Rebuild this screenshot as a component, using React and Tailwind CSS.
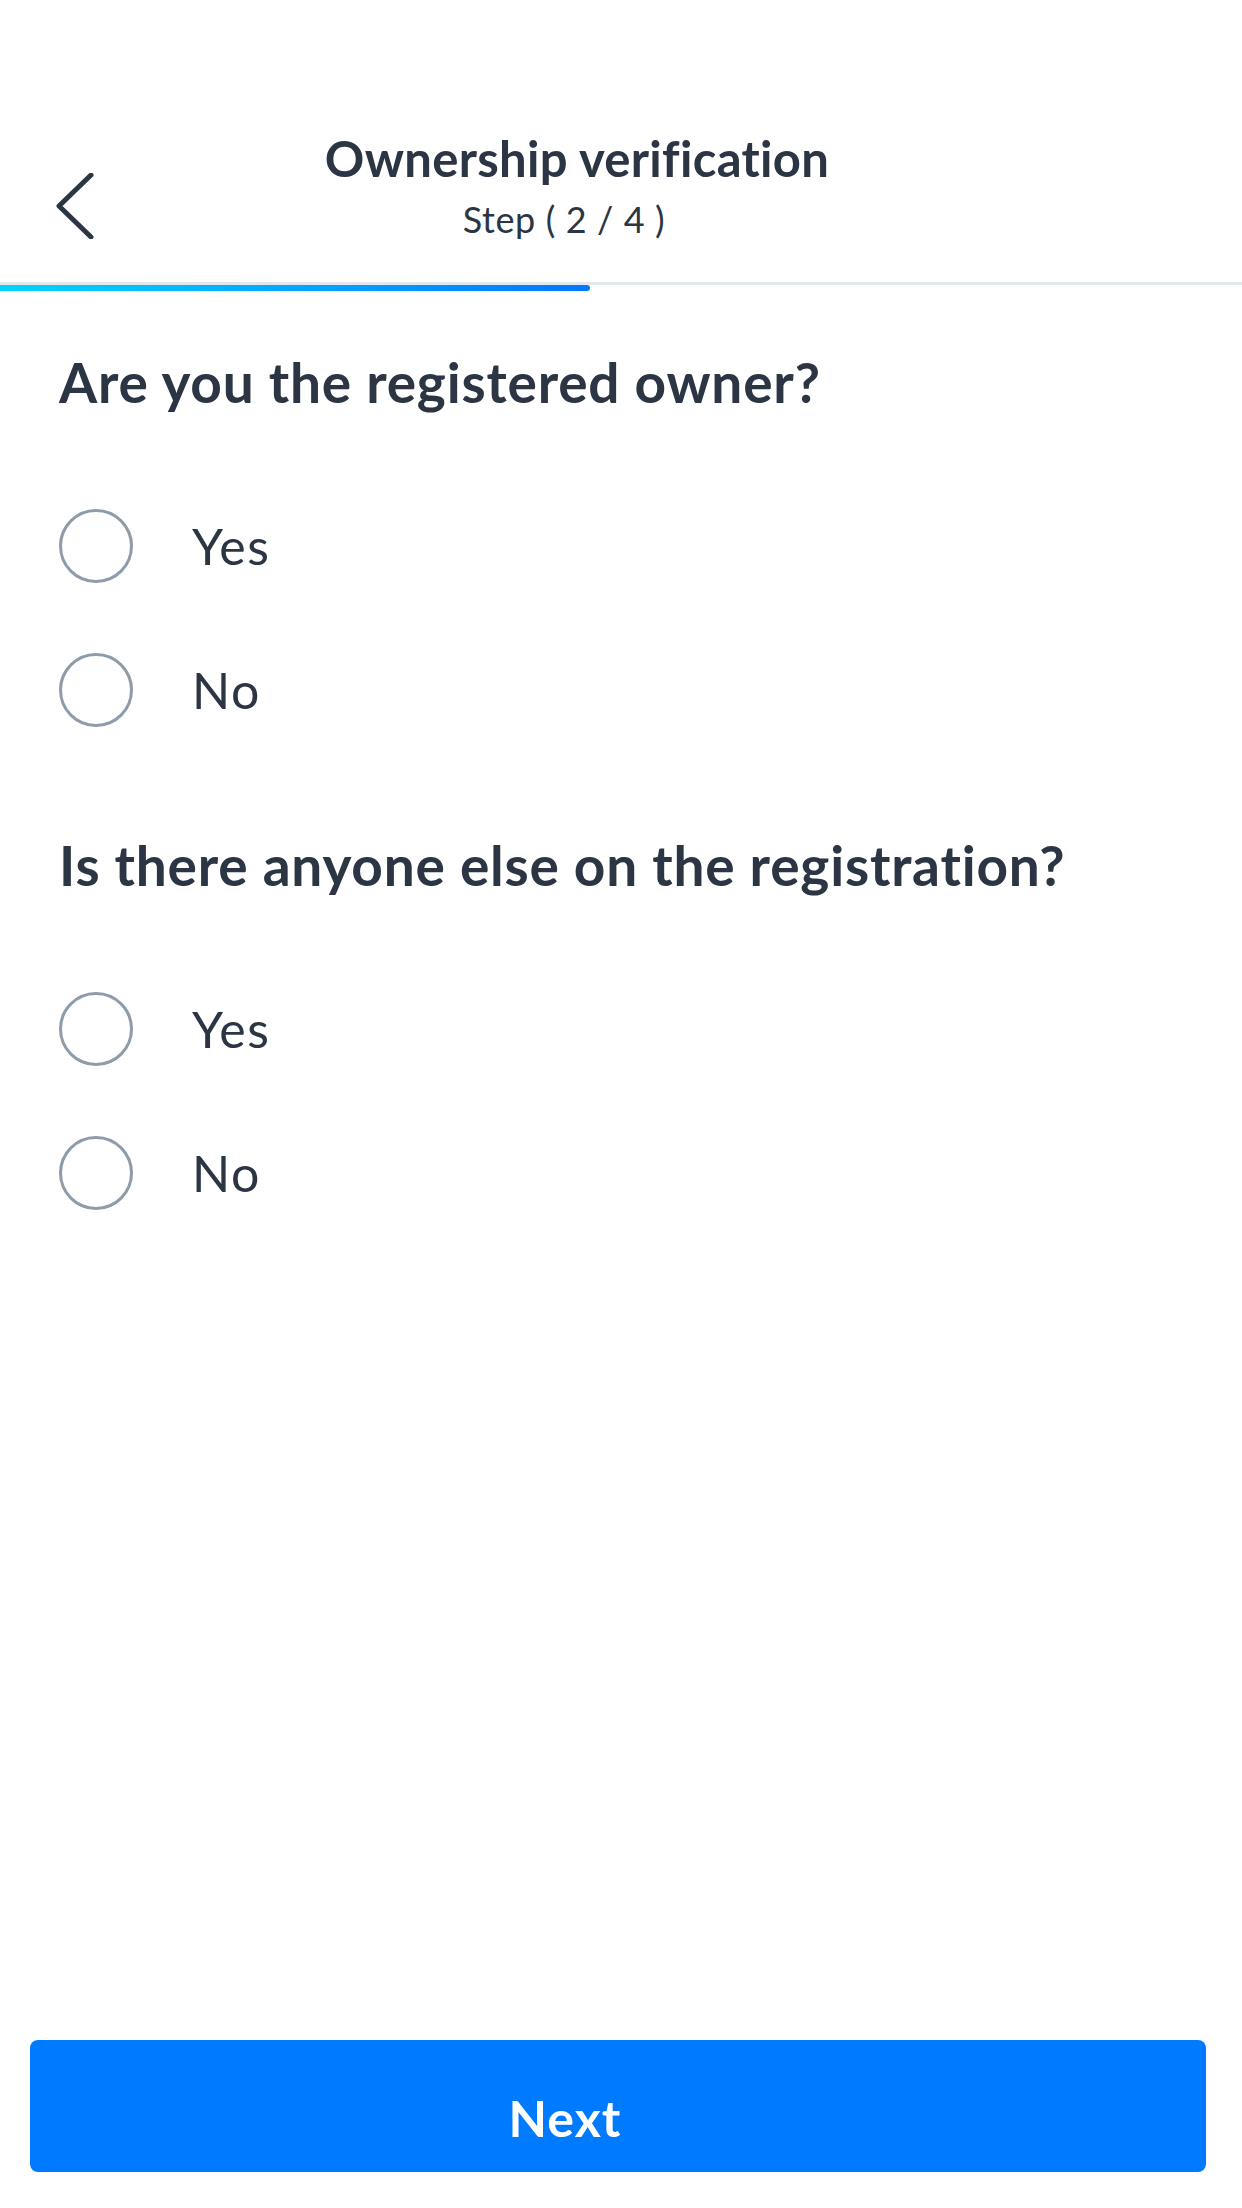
import React, { useState } from "react";

const questions = [
  { id: "owner", label: "Are you the registered owner?" },
  { id: "others", label: "Is there anyone else on the registration?" },
];

const Radio = ({ checked }) => (
  <span className="flex h-[74px] w-[74px] shrink-0 items-center justify-center rounded-full border-[3px] border-[#8e9ca9] bg-white">
    {checked && <span className="h-[40px] w-[40px] rounded-full bg-[#007aff]"></span>}
  </span>
);

const App = () => {
  const [answers, setAnswers] = useState({});

  return (
    <div className="flex h-[2208px] w-[1242px] flex-col bg-white font-['Lato',sans-serif] text-[#2b3543]">
      {/* header */}
      <div className="flex h-[282px] items-start pt-[129px]">
        <button className="ml-[52px] mt-[44px] flex h-[66px] w-[44px] items-center justify-center">
          <svg width="40" height="66" viewBox="0 0 40 66" fill="none">
            <path d="M37 2 L5 33 L37 64" stroke="#2b3543" strokeWidth="5" strokeLinecap="round" strokeLinejoin="round" />
          </svg>
        </button>
        <div className="ml-[-96px] flex flex-1 flex-col">
          <h1 className="pr-[88px] text-center text-[49px] font-bold leading-[58px] tracking-[0.3px]">Ownership verification</h1>
          <p className="mt-[11px] pr-[114px] text-center text-[36px] leading-[42px] tracking-[0.6px]">Step ( 2 / 4 )</p>
        </div>
      </div>

      {/* progress */}
      <div className="relative h-[9px]">
        <div className="h-[3px] bg-[#e3e8ec]"></div>
        <div className="h-[6px] w-[590px] rounded-r-full bg-gradient-to-r from-[#00d4ff] to-[#0077ff]"></div>
      </div>

      {/* questions */}
      <div className="flex flex-col gap-[71px] px-[59px] pt-[59px]">
        {questions.map((q) => (
          <div key={q.id} className="flex flex-col">
            <h2 className="text-[55px] font-bold leading-[64px] tracking-[0.8px]">{q.label}</h2>
            <div className="mt-[60px] flex flex-col">
              {["Yes", "No"].map((opt) => (
                <label
                  key={opt}
                  className="flex h-[144px] cursor-pointer items-center gap-[59px]"
                  onClick={() => setAnswers({ ...answers, [q.id]: opt })}
                >
                  <Radio checked={answers[q.id] === opt} />
                  <span className="text-[50px] leading-[58px] tracking-[1.5px]">{opt}</span>
                </label>
              ))}
            </div>
          </div>
        ))}
      </div>

      <div className="flex-1"></div>

      <div className="mb-[36px] ml-[30px] mr-[36px]">
        <button className="flex h-[132px] w-full items-center justify-center rounded-[8px] bg-[#007aff] pr-[106px] pt-[24px] text-[50px] font-bold tracking-[1px] text-white">
          Next
        </button>
      </div>
    </div>
  );
};

export default App;
